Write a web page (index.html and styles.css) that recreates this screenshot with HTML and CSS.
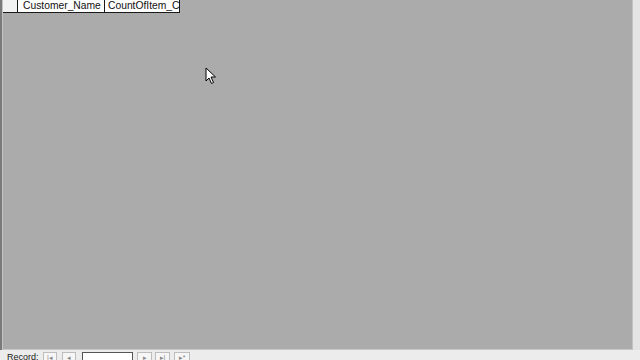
FILE: index.html
```html
<!DOCTYPE html>
<html>
<head>
<meta charset="utf-8">
<link rel="stylesheet" href="styles.css">
</head>
<body>
<div class="window">
  <div class="main">
    <div class="left-edge"></div>
    <div class="sheet">
      <div class="header">
        <div class="cell selector"></div>
        <div class="cell name">Customer_Name</div>
        <div class="cell count">CountOfItem_C</div>
      </div>
      <div class="empty">
        <svg class="cursor" width="12" height="18" viewBox="0 0 12 18">
          <path d="M1 1 L1 14 L4 11 L6.5 16.5 L8.5 15.5 L6 10 L10.5 10 Z" fill="#fff" stroke="#000" stroke-width="1"/>
        </svg>
      </div>
    </div>
    <div class="right-edge"></div>
  </div>
  <div class="navbar">
    <span class="label">Record:</span>
    <span class="btn b1">|◂</span>
    <span class="btn b2">◂</span>
    <span class="box"></span>
    <span class="btn b3">▸</span>
    <span class="btn b4">▸|</span>
    <span class="btn b5">▸*</span>
  </div>
</div>
</body>
</html>
```
FILE: styles.css
```css
html, body {
  margin: 0;
  padding: 0;
  width: 640px;
  height: 360px;
  overflow: hidden;
  background: #ececec;
  font-family: "Liberation Sans", Arial, sans-serif;
}
.window {
  display: flex;
  flex-direction: column;
  width: 640px;
  height: 360px;
}
.main {
  display: flex;
  height: 350px;
}
.left-edge {
  width: 2px;
  background: #7a7a7a;
  border-right: 1px solid #c4c4c4;
}
.sheet {
  flex: 1;
  display: flex;
  flex-direction: column;
  background: #ababab;
  border-bottom: 1px solid #c8c8c8;
}
.right-edge {
  width: 7px;
  background: #e4e4e4;
  border-left: 1px solid #c2c2c2;
}
.header {
  display: flex;
  height: 13px;
}
.cell {
  box-sizing: border-box;
  height: 13px;
  background: #ffffff;
  border: 1px solid #1a1a1a;
  border-left: none;
  border-top: none;
  font-size: 10.3px;
  line-height: 12px;
  color: #111;
  white-space: nowrap;
  overflow: hidden;
}
.selector {
  width: 15px;
  background: #f2f2f2;
}
.name {
  width: 87px;
  padding-left: 5px;
}
.count {
  width: 75px;
  padding-left: 3px;
}
.empty {
  flex: 1;
  position: relative;
}
.cursor {
  position: absolute;
  left: 202px;
  top: 54px;
}
.navbar {
  flex: 1;
  display: flex;
  align-items: flex-start;
  padding-top: 2px;
  padding-left: 7px;
  color: #222;
  overflow: hidden;
}
.label {
  width: 36px;
  font-size: 9px;
  line-height: 11px;
}
.btn {
  box-sizing: border-box;
  width: 15px;
  height: 12px;
  border: 1px solid #bdbdbd;
  background: #f6f6f6;
  font-size: 7px;
  line-height: 9px;
  text-align: center;
  color: #888;
}
.b1 { width: 14px; }
.b2 { width: 14px; margin-left: 5px; }
.box {
  box-sizing: border-box;
  width: 51px;
  height: 12px;
  border: 1px solid #555;
  background: #fff;
  margin-left: 6px;
}
.b3 { margin-left: 4px; }
.b4 { margin-left: 3px; }
.b5 { width: 16px; margin-left: 4px; }
```
